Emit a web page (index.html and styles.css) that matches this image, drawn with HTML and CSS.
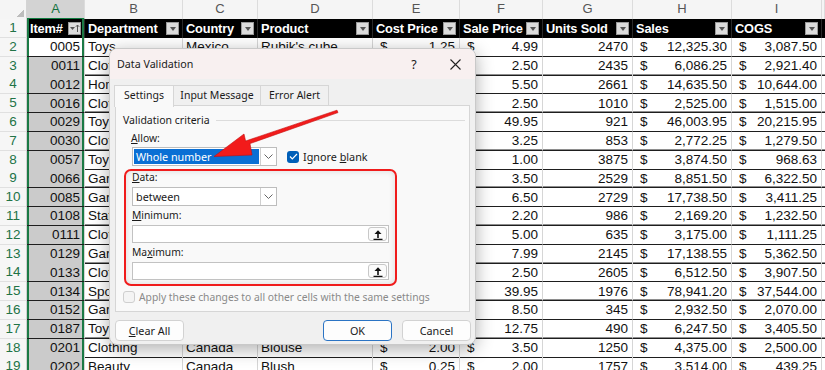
FILE: index.html
```html
<!DOCTYPE html>
<html lang="en">
<head>
    <meta charset="UTF-8">
    <title>Data Validation</title>
    <link rel="stylesheet" href="styles.css">
</head>
<body>

    <!-- Worksheet -->
    <div class="sheet">
        <div class="row letters">
            <div class="corner"></div>
            <div class="ch sel">A</div><div class="ch">B</div><div class="ch">C</div><div class="ch">D</div><div class="ch">E</div>
            <div class="ch">F</div><div class="ch">G</div><div class="ch">H</div><div class="ch">I</div><div class="ch"></div>
        </div>

        <div class="row head">
            <div class="rh">1</div>
            <div class="hc ca">Item# <span class="fb sort"><svg width="11" height="11" viewBox="0 0 11 11"><path d="M1 4h5L3.5 7z" fill="#555"/><path d="M8.5 9V2M6.8 3.8 8.5 2l1.7 1.8" stroke="#555" fill="none"/></svg></span></div>
            <div class="hc">Department <span class="fb"></span></div>
            <div class="hc">Country <span class="fb"></span></div>
            <div class="hc">Product <span class="fb"></span></div>
            <div class="hc">Cost Price <span class="fb"></span></div>
            <div class="hc">Sale Price <span class="fb"></span></div>
            <div class="hc">Units Sold <span class="fb"></span></div>
            <div class="hc">Sales <span class="fb"></span></div>
            <div class="hc">COGS <span class="fb"></span></div>
            <div class="hc"></div>
        </div>

        <div class="row"><div class="rh">2</div><div class="cell ca num active">0005</div><div class="cell">Toys</div><div class="cell">Mexico</div><div class="cell">Rubik's cube</div><div class="cell acct"><span>$</span><span>1.25</span></div><div class="cell acct"><span>$</span><span>4.99</span></div><div class="cell num">2470</div><div class="cell acct"><span>$</span><span>12,325.30</span></div><div class="cell acct"><span>$</span><span>3,087.50</span></div><div class="cell"></div></div>
        <div class="row"><div class="rh">3</div><div class="cell ca num">0011</div><div class="cell">Clothing</div><div class="cell">USA</div><div class="cell">T-shirt</div><div class="cell acct"><span>$</span><span>1.20</span></div><div class="cell acct"><span>$</span><span>2.50</span></div><div class="cell num">2435</div><div class="cell acct"><span>$</span><span>6,086.25</span></div><div class="cell acct"><span>$</span><span>2,921.40</span></div><div class="cell"></div></div>
        <div class="row"><div class="rh">4</div><div class="cell ca num">0012</div><div class="cell">Home</div><div class="cell">Canada</div><div class="cell">Candle</div><div class="cell acct"><span>$</span><span>4.00</span></div><div class="cell acct"><span>$</span><span>5.50</span></div><div class="cell num">2661</div><div class="cell acct"><span>$</span><span>14,635.50</span></div><div class="cell acct"><span>$</span><span>10,644.00</span></div><div class="cell"></div></div>
        <div class="row"><div class="rh">5</div><div class="cell ca num">0016</div><div class="cell">Clothing</div><div class="cell">USA</div><div class="cell">Socks</div><div class="cell acct"><span>$</span><span>1.50</span></div><div class="cell acct"><span>$</span><span>2.50</span></div><div class="cell num">1010</div><div class="cell acct"><span>$</span><span>2,525.00</span></div><div class="cell acct"><span>$</span><span>1,515.00</span></div><div class="cell"></div></div>
        <div class="row"><div class="rh">6</div><div class="cell ca num">0029</div><div class="cell">Toys</div><div class="cell">Mexico</div><div class="cell">Lego set</div><div class="cell acct"><span>$</span><span>21.95</span></div><div class="cell acct"><span>$</span><span>49.95</span></div><div class="cell num">921</div><div class="cell acct"><span>$</span><span>46,003.95</span></div><div class="cell acct"><span>$</span><span>20,215.95</span></div><div class="cell"></div></div>
        <div class="row"><div class="rh">7</div><div class="cell ca num">0030</div><div class="cell">Clothing</div><div class="cell">Canada</div><div class="cell">Scarf</div><div class="cell acct"><span>$</span><span>1.50</span></div><div class="cell acct"><span>$</span><span>3.25</span></div><div class="cell num">853</div><div class="cell acct"><span>$</span><span>2,772.25</span></div><div class="cell acct"><span>$</span><span>1,279.50</span></div><div class="cell"></div></div>
        <div class="row"><div class="rh">8</div><div class="cell ca num">0057</div><div class="cell">Toys</div><div class="cell">USA</div><div class="cell">Yo-yo</div><div class="cell acct"><span>$</span><span>0.25</span></div><div class="cell acct"><span>$</span><span>1.00</span></div><div class="cell num">3875</div><div class="cell acct"><span>$</span><span>3,874.50</span></div><div class="cell acct"><span>$</span><span>968.63</span></div><div class="cell"></div></div>
        <div class="row"><div class="rh">9</div><div class="cell ca num">0066</div><div class="cell">Garden</div><div class="cell">Mexico</div><div class="cell">Trowel</div><div class="cell acct"><span>$</span><span>2.50</span></div><div class="cell acct"><span>$</span><span>3.50</span></div><div class="cell num">2529</div><div class="cell acct"><span>$</span><span>8,851.50</span></div><div class="cell acct"><span>$</span><span>6,322.50</span></div><div class="cell"></div></div>
        <div class="row"><div class="rh">10</div><div class="cell ca num">0085</div><div class="cell">Garden</div><div class="cell">USA</div><div class="cell">Seeds</div><div class="cell acct"><span>$</span><span>1.25</span></div><div class="cell acct"><span>$</span><span>6.50</span></div><div class="cell num">2729</div><div class="cell acct"><span>$</span><span>17,738.50</span></div><div class="cell acct"><span>$</span><span>3,411.25</span></div><div class="cell"></div></div>
        <div class="row"><div class="rh">11</div><div class="cell ca num">0108</div><div class="cell">Stationery</div><div class="cell">Canada</div><div class="cell">Notebook</div><div class="cell acct"><span>$</span><span>1.25</span></div><div class="cell acct"><span>$</span><span>2.20</span></div><div class="cell num">986</div><div class="cell acct"><span>$</span><span>2,169.20</span></div><div class="cell acct"><span>$</span><span>1,232.50</span></div><div class="cell"></div></div>
        <div class="row"><div class="rh">12</div><div class="cell ca num">0111</div><div class="cell">Clothing</div><div class="cell">USA</div><div class="cell">Hat</div><div class="cell acct"><span>$</span><span>1.75</span></div><div class="cell acct"><span>$</span><span>5.00</span></div><div class="cell num">635</div><div class="cell acct"><span>$</span><span>3,175.00</span></div><div class="cell acct"><span>$</span><span>1,111.25</span></div><div class="cell"></div></div>
        <div class="row"><div class="rh">13</div><div class="cell ca num">0129</div><div class="cell">Garden</div><div class="cell">Mexico</div><div class="cell">Hose</div><div class="cell acct"><span>$</span><span>2.50</span></div><div class="cell acct"><span>$</span><span>7.99</span></div><div class="cell num">2145</div><div class="cell acct"><span>$</span><span>17,138.55</span></div><div class="cell acct"><span>$</span><span>5,362.50</span></div><div class="cell"></div></div>
        <div class="row"><div class="rh">14</div><div class="cell ca num">0133</div><div class="cell">Clothing</div><div class="cell">Canada</div><div class="cell">Gloves</div><div class="cell acct"><span>$</span><span>1.50</span></div><div class="cell acct"><span>$</span><span>2.50</span></div><div class="cell num">2605</div><div class="cell acct"><span>$</span><span>6,512.50</span></div><div class="cell acct"><span>$</span><span>3,907.50</span></div><div class="cell"></div></div>
        <div class="row"><div class="rh">15</div><div class="cell ca num">0134</div><div class="cell">Sports</div><div class="cell">USA</div><div class="cell">Football</div><div class="cell acct"><span>$</span><span>19.00</span></div><div class="cell acct"><span>$</span><span>39.95</span></div><div class="cell num">1976</div><div class="cell acct"><span>$</span><span>78,941.20</span></div><div class="cell acct"><span>$</span><span>37,544.00</span></div><div class="cell"></div></div>
        <div class="row"><div class="rh">16</div><div class="cell ca num">0152</div><div class="cell">Garden</div><div class="cell">Canada</div><div class="cell">Rake</div><div class="cell acct"><span>$</span><span>6.00</span></div><div class="cell acct"><span>$</span><span>8.50</span></div><div class="cell num">345</div><div class="cell acct"><span>$</span><span>2,932.50</span></div><div class="cell acct"><span>$</span><span>2,070.00</span></div><div class="cell"></div></div>
        <div class="row"><div class="rh">17</div><div class="cell ca num">0187</div><div class="cell">Toys</div><div class="cell">Mexico</div><div class="cell">Puzzle</div><div class="cell acct"><span>$</span><span>6.95</span></div><div class="cell acct"><span>$</span><span>12.75</span></div><div class="cell num">490</div><div class="cell acct"><span>$</span><span>6,247.50</span></div><div class="cell acct"><span>$</span><span>3,405.50</span></div><div class="cell"></div></div>
        <div class="row"><div class="rh">18</div><div class="cell ca num">0201</div><div class="cell">Clothing</div><div class="cell">Canada</div><div class="cell">Blouse</div><div class="cell acct"><span>$</span><span>2.00</span></div><div class="cell acct"><span>$</span><span>3.50</span></div><div class="cell num">1250</div><div class="cell acct"><span>$</span><span>4,375.00</span></div><div class="cell acct"><span>$</span><span>2,500.00</span></div><div class="cell"></div></div>
        <div class="row"><div class="rh">19</div><div class="cell ca num">0202</div><div class="cell">Beauty</div><div class="cell">Canada</div><div class="cell">Blush</div><div class="cell acct"><span>$</span><span>0.25</span></div><div class="cell acct"><span>$</span><span>2.00</span></div><div class="cell num">1757</div><div class="cell acct"><span>$</span><span>3,514.00</span></div><div class="cell acct"><span>$</span><span>439.25</span></div><div class="cell"></div></div>
    </div>

    <!-- Data Validation dialog -->
    <div class="dlg">
        <div class="dlg-title">
            <span class="dlg-name">Data Validation</span>
            <span class="help">?</span>
            <span class="close"><svg width="11" height="11" viewBox="0 0 11 11"><path d="M0.5 0.5l10 10M10.5 0.5l-10 10" stroke="#222" stroke-width="1.1"/></svg></span>
        </div>
        <div class="tabs">
            <div class="tab on">Settings</div>
            <div class="tab t2">Input Message</div>
            <div class="tab t3">Error Alert</div>
        </div>
        <div class="panel">
            <div class="legend"><span>Validation criteria</span></div>
            <div class="lbl"><u>A</u>llow:</div>
            <div class="allow-row">
                <div class="select">
                    <span class="sel-val"><span class="hl">Whole number</span></span>
                    <span class="chev"><svg width="9" height="5" viewBox="0 0 9 5"><path d="M0.5 0.5l4 4 4-4" stroke="#666" fill="none"/></svg></span>
                </div>
                <span class="check on"><svg width="9" height="7" viewBox="0 0 9 7"><path d="M1 3.5l2.3 2.3L8 1" stroke="#fff" stroke-width="1.2" fill="none"/></svg></span>
                <span class="check-lbl">Ignore <u>b</u>lank</span>
            </div>
            <div class="redbox">
                <div class="lbl"><u>D</u>ata:</div>
                <div class="select">
                    <span class="sel-val">between</span>
                    <span class="chev"><svg width="9" height="5" viewBox="0 0 9 5"><path d="M0.5 0.5l4 4 4-4" stroke="#666" fill="none"/></svg></span>
                </div>
                <div class="lbl"><u>M</u>inimum:</div>
                <div class="field">
                    <span class="ref-btn"><svg width="10" height="11" viewBox="0 0 10 11"><path d="M5 9V2.5" stroke="#111" stroke-width="1.6"/><path d="M1.5 5L5 1.2 8.5 5z" fill="#111"/><path d="M0.5 10.3h9" stroke="#111" stroke-width="1.2"/></svg></span>
                </div>
                <div class="lbl">Ma<u>x</u>imum:</div>
                <div class="field">
                    <span class="ref-btn"><svg width="10" height="11" viewBox="0 0 10 11"><path d="M5 9V2.5" stroke="#111" stroke-width="1.6"/><path d="M1.5 5L5 1.2 8.5 5z" fill="#111"/><path d="M0.5 10.3h9" stroke="#111" stroke-width="1.2"/></svg></span>
                </div>
            </div>
            <div class="apply">
                <span class="check off"></span>
                <span>Apply these changes to all other cells with the same settings</span>
            </div>
        </div>
        <div class="dlg-foot">
            <button type="button" class="btn"><u>C</u>lear All</button>
            <span class="spacer"></span>
            <button type="button" class="btn ok">OK</button>
            <button type="button" class="btn">Cancel</button>
        </div>
    </div>

    <!-- annotation arrow -->
    <svg class="arrow" width="825" height="370" viewBox="0 0 825 370">
        <path d="M338 112.6 L250 143.6 L252 155 L214 156.5 L244 134 L245.6 141 L337 110.2 Z" fill="#f21b1b" stroke="#c40d0d" stroke-width="0.6" stroke-linejoin="round"/>
    </svg>

</body>
</html>
```

FILE: styles.css
```css
body {
    margin: 0;
    width: 825px;
    height: 370px;
    overflow: hidden;
    position: relative;
    background: #fff;
    font-family: "Liberation Sans", Arial, sans-serif;
    font-size: 13.5px;
    color: #111;
}

/* worksheet grid */
.row {
    display: grid;
    grid-template-columns: 27px 58px 98px 75px 115px 87px 83px 90px 99px 90px 3px;
    height: 18.8px;
}
.row.letters {
    height: 19px;
    background: #f5f5f5;
}
.corner {
    border-right: 1px solid #d4d4d4;
    border-bottom: 1px solid #c6c6c6;
    background: linear-gradient(135deg, transparent 62%, #bdbdbd 62%) no-repeat right 2px bottom 2px / 10px 10px;
}
.ch {
    color: #555;
    font-size: 13px;
    text-align: center;
    line-height: 18px;
    border-right: 1px solid #dcdcdc;
    border-bottom: 1px solid #c6c6c6;
}
.ch.sel {
    background: #d3d3d3;
    color: #137240;
    border-bottom: 2px solid #107c41;
}
.rh {
    background: #f6f6f6;
    color: #217346;
    font-size: 13.5px;
    text-align: center;
    line-height: 18px;
    border-right: 1px solid #d0d0d0;
    border-bottom: 1px solid #e0e0e0;
}

.row.head .hc {
    background: #000;
    color: #fff;
    font-weight: bold;
    font-size: 12.8px;
    letter-spacing: -0.15px;
    display: flex;
    align-items: center;
    justify-content: space-between;
    padding: 0 3px 0 3px;
    white-space: nowrap;
    border-right: 1px solid #2a2a2a;
}
.fb {
    width: 13px;
    height: 13px;
    background: #dcdcdc;
    border: 1px solid #9a9a9a;
    box-sizing: border-box;
    display: flex;
    align-items: center;
    justify-content: center;
    flex: none;
}
.fb::after {
    content: "";
    border-left: 3.5px solid transparent;
    border-right: 3.5px solid transparent;
    border-top: 4px solid #555;
}
.fb.sort::after {
    display: none;
}

.cell {
    display: flex;
    align-items: center;
    padding: 0 4px 0 3px;
    white-space: nowrap;
    overflow: hidden;
    border-right: 1px solid #d6d6d6;
    border-bottom: 1px solid #1e1e1e;
}
.row:nth-child(even) .cell {
    box-shadow: inset 0 -1px 0 #8e8e8e;
}
.cell.num {
    justify-content: flex-end;
}
.cell.acct {
    justify-content: space-between;
    padding-left: 7px;
}
.ca {
    background: #cbcbcb;
    box-shadow: inset 2px 0 0 #1b7a45, inset -2px 0 0 #1b7a45 !important;
}
.row.head .ca {
    background: #000;
}
.ca.active {
    background: #fff;
}

/* dialog */
.dlg {
    position: absolute;
    left: 109px;
    top: 48px;
    width: 367px;
    height: 297px;
    box-sizing: border-box;
    background: #f0f0f0;
    border: 1px solid #c9c9c9;
    border-radius: 8px;
    box-shadow: 0 4px 18px rgba(0, 0, 0, 0.32);
    font-family: "Noto Sans", "Open Sans", sans-serif;
    font-size: 10.3px;
    color: #1a1a1a;
    display: flex;
    flex-direction: column;
    overflow: hidden;
}
.dlg-title {
    height: 30px;
    flex: none;
    background: #f8f0f0;
    display: flex;
    align-items: center;
    padding-left: 7px;
}
.dlg-name {
    font-size: 10.7px;
    flex: 1;
}
.help {
    font-size: 12.5px;
    width: 20px;
    text-align: center;
    margin-right: 21px;
}
.close {
    width: 20px;
    display: flex;
    justify-content: center;
    margin-right: 10px;
}

.tabs {
    display: flex;
    margin: 6px 0 0 5px;
    height: 20px;
}
.tab {
    border: 1px solid #d6d6d6;
    border-bottom: none;
    line-height: 19px;
    text-align: center;
    background: #f0f0f0;
    margin-left: -1px;
    font-size: 10.5px;
}
.tab.on {
    width: 58px;
    background: #f9f9f9;
    height: 21px;
    position: relative;
    z-index: 1;
}
.tab.t2 {
    width: 86px;
}
.tab.t3 {
    width: 67px;
}

.panel {
    margin: 0 5px 0 5px;
    height: 207px;
    box-sizing: border-box;
    background: #f9f9f9;
    border: 1px solid #d6d6d6;
    padding: 7px 0 0 7px;
}
.legend {
    display: flex;
    align-items: center;
    height: 14px;
    padding-right: 4px;
    font-size: 10.5px;
}
.legend::after {
    content: "";
    flex: 1;
    height: 1px;
    background: #dcdcdc;
    margin-left: 6px;
}
.lbl {
    line-height: 14px;
    margin: 4px 0 0 8px;
}
.allow-row {
    display: flex;
    align-items: center;
    margin: 2px 0 0 9px;
}
.select {
    width: 145px;
    height: 19px;
    box-sizing: border-box;
    background: #fff;
    border: 1px solid #bdbdbd;
    display: flex;
    flex: none;
}
.sel-val {
    flex: 1;
    display: flex;
    align-items: center;
    padding: 1px;
    padding-left: 3px;
    font-size: 10.8px;
}
.allow-row .sel-val {
    padding-left: 1px;
}
.hl {
    background: #0a6fd4;
    color: #fff;
    height: 100%;
    flex: 1;
    display: flex;
    align-items: center;
    padding-left: 2px;
}
.chev {
    width: 15px;
    border-left: 1px solid #cfcfcf;
    display: flex;
    align-items: center;
    justify-content: center;
}
.check {
    width: 12px;
    height: 12px;
    box-sizing: border-box;
    border-radius: 3px;
    display: flex;
    align-items: center;
    justify-content: center;
    flex: none;
}
.check.on {
    background: #005fb8;
    margin-left: 10px;
}
.check.off {
    border: 1px solid #cfcfcf;
    background: #f4f4f4;
}
.check-lbl {
    margin-left: 4px;
    font-size: 10.8px;
}

.redbox {
    margin: 3px 0 0 1px;
    width: 273px;
    height: 117px;
    box-sizing: border-box;
    border: 2px solid #f01c1c;
    border-radius: 7px;
    padding: 0 6px 0 6px;
    box-shadow: inset 0 0 6px rgba(0, 0, 0, 0.12);
}
.redbox .lbl {
    margin: 0;
    line-height: 13px;
}
.redbox .lbl ~ .lbl {
    margin-top: 3px;
}
.redbox .select {
    margin-top: 3px;
}
.field {
    margin-top: 3px;
    height: 18px;
    box-sizing: border-box;
    background: #fff;
    border: 1px solid #c2c2c2;
    display: flex;
    justify-content: flex-end;
    align-items: center;
    padding-right: 1px;
}
.ref-btn {
    width: 19px;
    height: 14px;
    box-sizing: border-box;
    border: 1px solid #c8c8c8;
    border-radius: 3px;
    background: #fbfbfb;
    display: flex;
    align-items: center;
    justify-content: center;
}
.apply {
    display: flex;
    align-items: center;
    margin: 4px 0 0 0;
    color: #8a8a8a;
}
.apply .check {
    margin-right: 4px;
}

.dlg-foot {
    display: flex;
    margin: 8px 4px 0 5px;
    gap: 10px;
}
.spacer {
    flex: 1;
}
.btn {
    width: 69px;
    height: 21px;
    font-family: inherit;
    font-size: 10.8px;
    color: #1a1a1a;
    background: #fdfdfd;
    border: 1px solid #d2d2d2;
    border-radius: 4px;
    padding: 0;
}
.btn.ok {
    border-color: #2b74c4;
}

.arrow {
    position: absolute;
    left: 0;
    top: 0;
    pointer-events: none;
}
```
